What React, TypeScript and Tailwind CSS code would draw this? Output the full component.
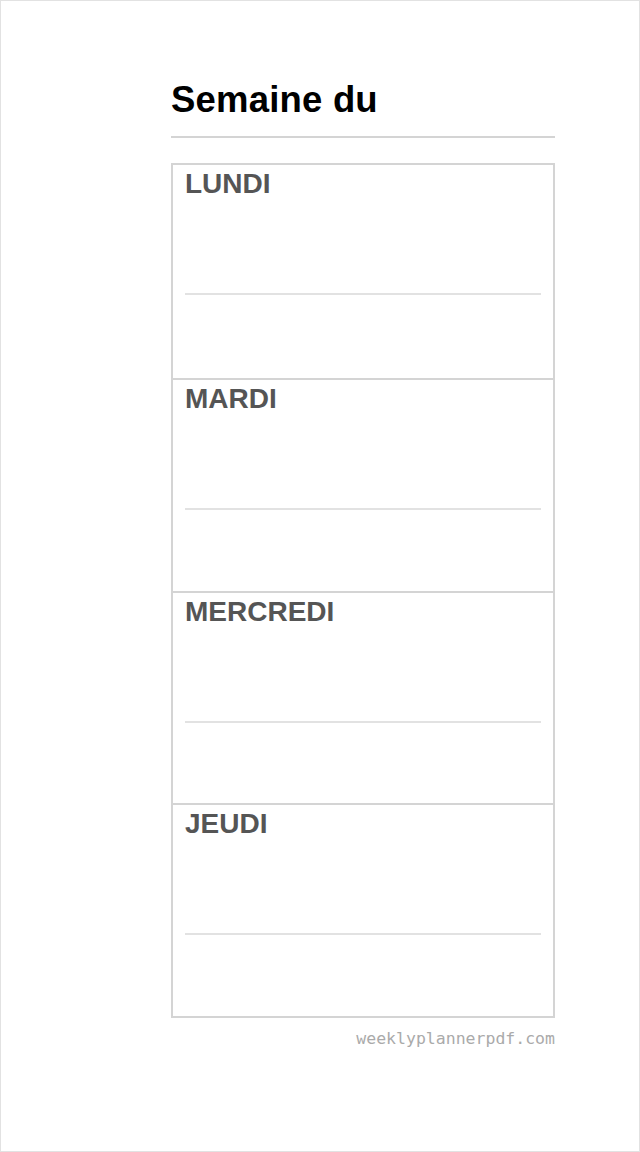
const days = ['LUNDI', 'MARDI', 'MERCREDI', 'JEUDI']

export default function App() {
  return (
    <div className="h-[1152px] w-[640px] bg-white border border-[#e2e2e2] font-['Liberation_Sans',Arial,sans-serif]">
      <div className="ml-[170px] w-[384px] pt-[79px]">
        <h1 className="text-[36.5px] leading-[40px] font-bold text-black tracking-[0.2px]">Semaine du</h1>
        <div className="mt-[16px] h-[2px] bg-[#d4d4d4]" />

        <div className="mt-[25px] border-2 border-[#d4d4d4]">
          {days.map((day, i) => (
            <div
              key={day}
              className={`h-[212.75px] px-[12px] pt-[5px] ${i > 0 ? 'border-t-2 border-[#d4d4d4]' : ''}`}
            >
              <div className="text-[28px] leading-[28px] font-bold text-[#555555]">{day}</div>
              <div className="mt-[95px] h-[2px] bg-[#e2e2e2]" />
            </div>
          ))}
        </div>

        <p className="mt-[11px] text-right text-[16.5px] leading-[20px] text-[#aaaaaa] font-['DejaVu_Sans_Mono','Liberation_Mono',monospace]">
          weeklyplannerpdf.com
        </p>
      </div>
    </div>
  )
}
